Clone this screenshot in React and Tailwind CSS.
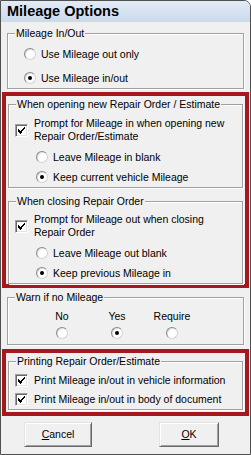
import React from 'react';

function Radio({ checked }) {
  return (
    <span className="w-[12px] h-[12px] shrink-0 rounded-full bg-white border border-t-[#8a8a8a] border-l-[#8a8a8a] border-b-[#d4d4d4] border-r-[#d4d4d4] shadow-[inset_1px_1px_0_#e0e0e0] flex items-center justify-center">
      {checked && <span className="w-[4px] h-[4px] rounded-full bg-black" />}
    </span>
  );
}

function Check() {
  return (
    <span className="w-[13px] h-[13px] shrink-0 bg-white border border-t-[#a0a0a0] border-l-[#a0a0a0] border-b-white border-r-white shadow-[inset_1px_1px_0_#696969,inset_-1px_-1px_0_#e3e3e3] flex items-center justify-center">
      <svg width="7" height="7" viewBox="0 0 7 7" shapeRendering="crispEdges">
        <path d="M0 2h1v1H0zM0 3h2v1H0zM0 4h3v1H0zM1 5h3v1H1zM2 6h1v1H2zM3 3h1v2H3zM4 2h1v2H4zM5 1h1v2H5zM6 0h1v2H6zM3 5h1v1H3zM4 3h1v1H4z" fill="#000" />
      </svg>
    </span>
  );
}

function Group({ label, children, className }) {
  return (
    <fieldset className={"border border-[#a0a0a0] shadow-[inset_1px_1px_0_#fff,1px_1px_0_#fff] " + (className || '')}>
      <legend className="ml-[7px] px-[1px] leading-[13px] bg-[#f0f0f0]">{label}</legend>
      {children}
    </fieldset>
  );
}

function RadioRow({ checked, children }) {
  return (
    <div className="h-[20px] flex items-center gap-[5px]">
      <Radio checked={checked} />
      <span className="whitespace-nowrap">{children}</span>
    </div>
  );
}

function CheckRow({ children, className }) {
  return (
    <div className={"flex items-center gap-[6px] " + (className || '')}>
      <Check />
      <span className="whitespace-nowrap">{children}</span>
    </div>
  );
}

function Btn({ children, className }) {
  return (
    <button className={"h-[25px] flex items-center justify-center bg-[#f0f0f0] border border-t-[#e3e3e3] border-l-[#e3e3e3] border-b-[#696969] border-r-[#696969] shadow-[inset_1px_1px_0_#fff,inset_-1px_-1px_0_#a0a0a0] text-[10.5px] leading-[13px] " + (className || '')}>
      {children}
    </button>
  );
}

export default function App() {
  return (
    <div className="w-[251px] h-[455px] flex flex-col bg-[#f0f0f0] border border-[#505050] rounded-tr-[7px] overflow-hidden font-['Liberation_Sans',Arial,sans-serif] text-[10.5px] leading-[13px] text-black">
      <div className="h-[21px] shrink-0 flex items-center pl-[6px] bg-linear-to-b from-[#e2ebf6] to-[#cadaec]">
        <span className="text-[14.5px] font-bold leading-none">Mileage Options</span>
      </div>
      <div className="flex-1 flex flex-col px-[1px]">
        <div className="px-[5px] mt-[5px]">
          <Group label="Mileage In/Out">
            <div className="flex flex-col gap-[4px] pt-[4px] pl-[16px]">
              <RadioRow>Use Mileage out only</RadioRow>
              <RadioRow checked>Use Mileage in/out</RadioRow>
            </div>
          </Group>
        </div>

        <div className="border-4 border-[#a5191e] px-[2px] mt-[3px]">
          <Group label="When opening new Repair Order / Estimate" className="mt-[2px]">
            <CheckRow className="pt-[6px] pl-[6px]">
              Prompt for Mileage in when opening new<br />Repair Order/Estimate
            </CheckRow>
            <div className="flex flex-col mt-[4px] pl-[27px]">
              <RadioRow>Leave Mileage in blank</RadioRow>
              <RadioRow checked>Keep current vehicle Mileage</RadioRow>
            </div>
          </Group>
          <Group label="When closing Repair Order" className="mt-[7px]">
            <CheckRow className="pt-[5px] pl-[6px]">
              Prompt for Mileage out when closing<br />Repair Order
            </CheckRow>
            <div className="flex flex-col mt-[4px] pl-[27px]">
              <RadioRow>Leave Mileage out blank</RadioRow>
              <RadioRow checked>Keep previous Mileage in</RadioRow>
            </div>
          </Group>
        </div>

        <div className="px-[5px] mt-[3px]">
          <Group label="Warn if no Mileage">
            <div className="pt-[6px] pb-[5px] pl-[34px] flex flex-col">
              <div className="flex gap-[15px]">
                <div className="w-[40px] text-center">No</div>
                <div className="w-[40px] text-center">Yes</div>
                <div className="w-[40px] text-center">Require</div>
              </div>
              <div className="flex gap-[15px] mt-[4px]">
                <div className="w-[40px] flex justify-center"><Radio /></div>
                <div className="w-[40px] flex justify-center"><Radio checked /></div>
                <div className="w-[40px] flex justify-center"><Radio /></div>
              </div>
            </div>
          </Group>
        </div>

        <div className="border-4 border-[#a5191e] px-[2px] pb-[2px] mt-[4px]">
          <Group label="Printing Repair Order/Estimate" className="mt-[2px]">
            <div className="flex flex-col gap-[3px] pt-[4px] pb-[2px] pl-[6px]">
              <CheckRow className="h-[16px]">Print Mileage in/out in vehicle information</CheckRow>
              <CheckRow className="h-[16px]">Print Mileage in/out in body of document</CheckRow>
            </div>
          </Group>
        </div>

        <div className="flex mt-[6px] pl-[22px]">
          <Btn className="w-[68px]"><span className="underline">C</span>ancel</Btn>
          <Btn className="w-[60px] ml-[67px]"><span className="underline">O</span>K</Btn>
        </div>
      </div>
    </div>
  );
}
